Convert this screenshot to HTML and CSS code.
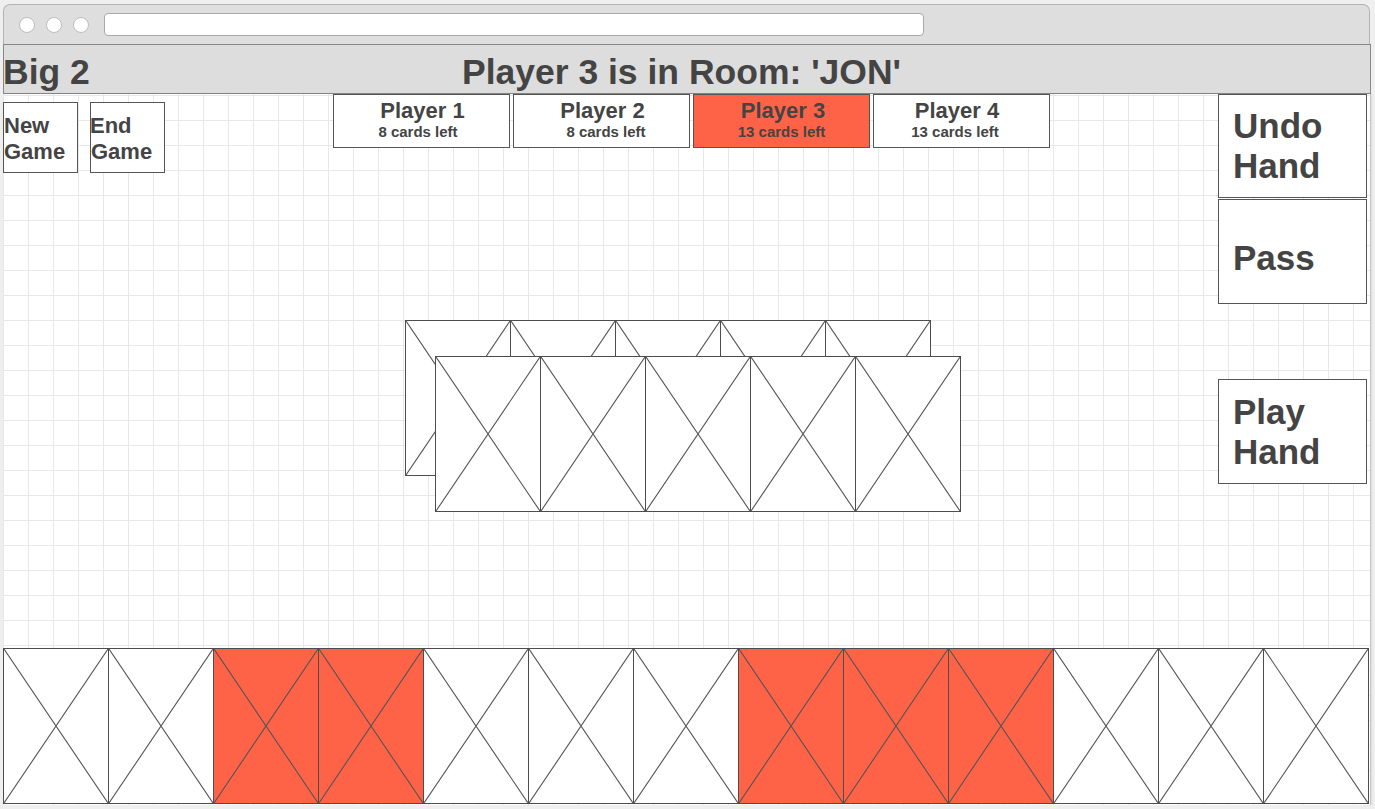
FILE: index.html
```html
<!DOCTYPE html>
<html>
<head>
<meta charset="utf-8">
<title>Big 2</title>
<link rel="stylesheet" href="styles.css">
</head>
<body>
<div class="window">
  <div class="chrome">
    <span class="dot"></span><span class="dot"></span><span class="dot"></span>
    <div class="url"></div>
  </div>
  <header class="header">
    <div class="brand">Big 2</div>
    <div class="title">Player 3 is in Room: 'JON'</div>
    <div></div>
  </header>
  <main class="content">
    <div class="table">
      <section class="main">
        <div class="topbar">
          <div class="ctrls">
            <div class="ctrl">New Game</div>
            <div class="ctrl">End Game</div>
          </div>
          <div class="tabs">
            <div class="tab p1"><div class="tab-name">Player 1</div><div class="tab-count">8 cards left</div></div>
            <div class="tab p2"><div class="tab-name">Player 2</div><div class="tab-count">8 cards left</div></div>
            <div class="tab p3 active"><div class="tab-name">Player 3</div><div class="tab-count">13 cards left</div></div>
            <div class="tab p4"><div class="tab-name">Player 4</div><div class="tab-count">13 cards left</div></div>
          </div>
        </div>
        <div class="pile">
          <div class="row">
            <div class="card"><svg viewBox="0 0 104 154" preserveAspectRatio="none"><path d="M0 0L104 154M104 0L0 154"/></svg></div>
            <div class="card"><svg viewBox="0 0 104 154" preserveAspectRatio="none"><path d="M0 0L104 154M104 0L0 154"/></svg></div>
            <div class="card"><svg viewBox="0 0 104 154" preserveAspectRatio="none"><path d="M0 0L104 154M104 0L0 154"/></svg></div>
            <div class="card"><svg viewBox="0 0 104 154" preserveAspectRatio="none"><path d="M0 0L104 154M104 0L0 154"/></svg></div>
            <div class="card"><svg viewBox="0 0 104 154" preserveAspectRatio="none"><path d="M0 0L104 154M104 0L0 154"/></svg></div>
          </div>
          <div class="row front">
            <div class="card"><svg viewBox="0 0 104 154" preserveAspectRatio="none"><path d="M0 0L104 154M104 0L0 154"/></svg></div>
            <div class="card"><svg viewBox="0 0 104 154" preserveAspectRatio="none"><path d="M0 0L104 154M104 0L0 154"/></svg></div>
            <div class="card"><svg viewBox="0 0 104 154" preserveAspectRatio="none"><path d="M0 0L104 154M104 0L0 154"/></svg></div>
            <div class="card"><svg viewBox="0 0 104 154" preserveAspectRatio="none"><path d="M0 0L104 154M104 0L0 154"/></svg></div>
            <div class="card"><svg viewBox="0 0 104 154" preserveAspectRatio="none"><path d="M0 0L104 154M104 0L0 154"/></svg></div>
          </div>
        </div>
      </section>
      <aside class="side">
        <div class="act">Undo<br>Hand</div>
        <div class="act pass">Pass</div>
        <div class="act play">Play<br>Hand</div>
      </aside>
    </div>
    <div class="hand">
      <div class="card"><svg viewBox="0 0 104 154" preserveAspectRatio="none"><path d="M0 0L104 154M104 0L0 154"/></svg></div>
      <div class="card"><svg viewBox="0 0 104 154" preserveAspectRatio="none"><path d="M0 0L104 154M104 0L0 154"/></svg></div>
      <div class="card sel"><svg viewBox="0 0 104 154" preserveAspectRatio="none"><path d="M0 0L104 154M104 0L0 154"/></svg></div>
      <div class="card sel"><svg viewBox="0 0 104 154" preserveAspectRatio="none"><path d="M0 0L104 154M104 0L0 154"/></svg></div>
      <div class="card"><svg viewBox="0 0 104 154" preserveAspectRatio="none"><path d="M0 0L104 154M104 0L0 154"/></svg></div>
      <div class="card"><svg viewBox="0 0 104 154" preserveAspectRatio="none"><path d="M0 0L104 154M104 0L0 154"/></svg></div>
      <div class="card"><svg viewBox="0 0 104 154" preserveAspectRatio="none"><path d="M0 0L104 154M104 0L0 154"/></svg></div>
      <div class="card sel"><svg viewBox="0 0 104 154" preserveAspectRatio="none"><path d="M0 0L104 154M104 0L0 154"/></svg></div>
      <div class="card sel"><svg viewBox="0 0 104 154" preserveAspectRatio="none"><path d="M0 0L104 154M104 0L0 154"/></svg></div>
      <div class="card sel"><svg viewBox="0 0 104 154" preserveAspectRatio="none"><path d="M0 0L104 154M104 0L0 154"/></svg></div>
      <div class="card"><svg viewBox="0 0 104 154" preserveAspectRatio="none"><path d="M0 0L104 154M104 0L0 154"/></svg></div>
      <div class="card"><svg viewBox="0 0 104 154" preserveAspectRatio="none"><path d="M0 0L104 154M104 0L0 154"/></svg></div>
      <div class="card"><svg viewBox="0 0 104 154" preserveAspectRatio="none"><path d="M0 0L104 154M104 0L0 154"/></svg></div>
    </div>
  </main>
</div>
</body>
</html>
```
FILE: styles.css
```css
html, body {
  margin: 0;
  background: #efefef;
  font-family: "Liberation Sans", Arial, sans-serif;
  color: #444;
}

.window {
  margin: 4px 0 0 3px;
  width: 1368px;
}

.chrome {
  width: 1367px;
  height: 40px;
  box-sizing: border-box;
  border: 1px solid #b4b4b4;
  border-bottom: none;
  border-radius: 7px 7px 0 0;
  background: #dedede;
  display: flex;
  align-items: center;
  padding-left: 15px;
}

.dot {
  width: 16px;
  height: 16px;
  box-sizing: border-box;
  border-radius: 50%;
  border: 1px solid #bdbdbd;
  background: #fff;
  margin-right: 11px;
  flex: none;
}

.url {
  margin-left: 4px;
  width: 820px;
  height: 23px;
  box-sizing: border-box;
  border: 1px solid #a9a9a9;
  border-radius: 4px;
  background: #fff;
}

.header {
  height: 50px;
  box-sizing: border-box;
  border: 1px solid #888;
  background: #ddd;
  display: grid;
  grid-template-columns: 1fr auto 1fr;
  align-items: end;
  padding-right: 11px;
}

.brand,
.title {
  font-size: 35.5px;
  font-weight: bold;
  white-space: nowrap;
}

.brand {
  margin-left: -1px;
}

.content {
  height: 711px;
  box-sizing: border-box;
  background-color: #fff;
  background-image:
    linear-gradient(to right, #e8e8e8 1px, transparent 1px),
    linear-gradient(to bottom, #e8e8e8 1px, transparent 1px);
  background-size: 25px 25px;
  background-position: 0 1px;
  border-right: 1px solid #c4c4c4;
  box-shadow: 1px 0 2px rgba(0, 0, 0, 0.08);
}

.table {
  display: grid;
  grid-template-columns: 1215px 149px;
}

.topbar {
  display: flex;
  align-items: flex-start;
}

.ctrls {
  display: flex;
  gap: 12px;
  margin-top: 8px;
}

.ctrl {
  width: 75px;
  height: 71px;
  box-sizing: border-box;
  border: 1px solid #555;
  background: #fff;
  font-size: 22px;
  font-weight: bold;
  padding-top: 10px;
}

.ctrl + .ctrl {
  text-indent: -1px;
}

.tabs {
  display: flex;
  gap: 3px;
  margin-left: 168px;
}

.tab {
  width: 177px;
  height: 54px;
  box-sizing: border-box;
  border: 1px solid #555;
  background: #fff;
  text-align: center;
  padding-top: 3px;
}

.tab.active {
  background: #ff6347;
}

.tab-name {
  font-size: 22px;
  font-weight: bold;
  line-height: 25px;
}

.tab-count {
  font-size: 15px;
  font-weight: bold;
  line-height: 17px;
}

.p1 .tab-name { padding-left: 2px; }
.p1 .tab-count { padding-right: 7px; }
.p2 .tab-name { padding-left: 2px; }
.p2 .tab-count { padding-left: 9px; }
.p3 .tab-name { padding-left: 3px; }
.p4 .tab-name { padding-right: 9px; }
.p4 .tab-count { padding-right: 13px; }

.pile {
  display: grid;
  width: max-content;
  margin: 147px 0 0 402px;
}

.row {
  grid-area: 1 / 1;
  display: flex;
}

.row.front {
  margin: 36px 0 0 30px;
}

.card {
  flex: none;
  width: 106px;
  height: 156px;
  box-sizing: border-box;
  border: 1px solid #4d4d4d;
  background: #fff;
  margin-left: -1px;
}

.card:first-child {
  margin-left: 0;
}

.card.sel {
  background: #ff6347;
}

.card svg {
  display: block;
  width: 104px;
  height: 154px;
}

.card path {
  fill: none;
  stroke: #555;
  stroke-width: 1.1;
}

.side {
  display: flex;
  flex-direction: column;
}

.act {
  width: 149px;
  height: 104px;
  box-sizing: border-box;
  border: 1px solid #555;
  background: #fff;
  font-size: 35px;
  font-weight: bold;
  display: flex;
  align-items: center;
  padding-left: 14px;
}

.act.pass {
  margin-top: 1px;
  height: 105px;
  padding-top: 12px;
}

.act.play {
  margin-top: 75px;
  height: 105px;
}

.hand {
  display: flex;
  margin-top: 136px;
}
```
